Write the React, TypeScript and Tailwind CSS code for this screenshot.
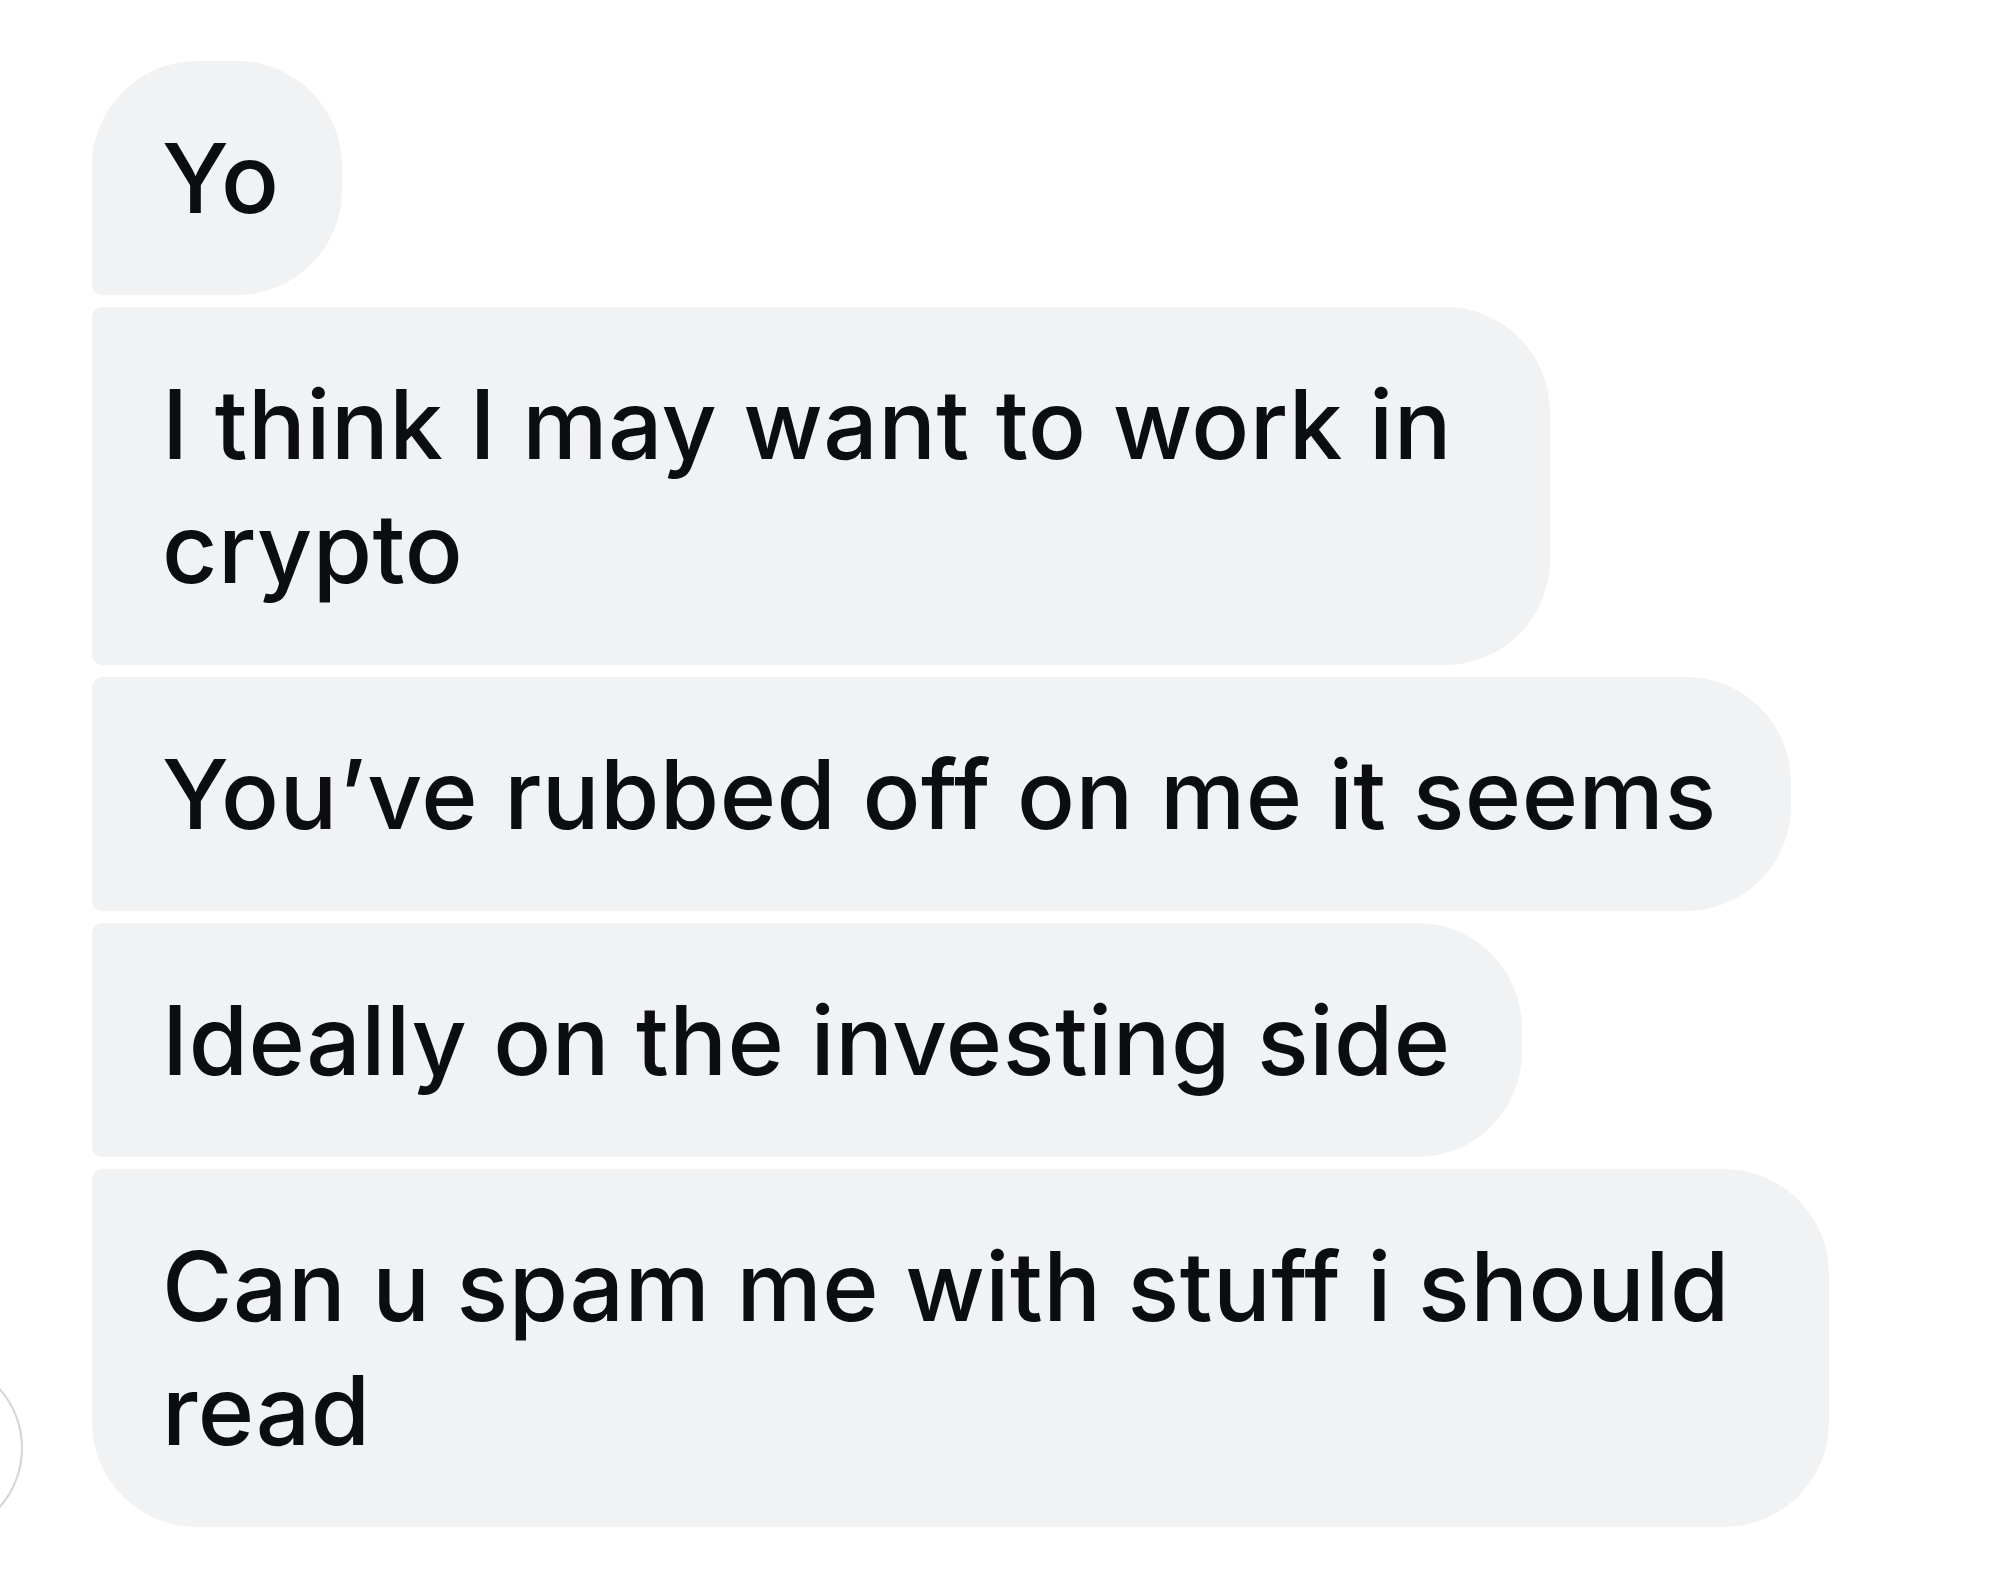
import React from "react";

type Msg = {
  lines: string[];
  width: string;
  corners: string;
};

const messages: Msg[] = [
  { lines: ["Yo"], width: "w-[250px]", corners: "rounded-tl-[105px] rounded-bl-[10px]" },
  { lines: ["I think I may want to work in", "crypto"], width: "w-[1458px]", corners: "rounded-l-[10px]" },
  { lines: ["You\u2019ve rubbed off on me it seems"], width: "w-[1699px]", corners: "rounded-l-[10px]" },
  { lines: ["Ideally on the investing side"], width: "w-[1430px]", corners: "rounded-l-[10px]" },
  { lines: ["Can u spam me with stuff i should", "read"], width: "w-[1737px]", corners: "rounded-tl-[10px] rounded-bl-[105px]" },
];

function Bubble({ msg }: { msg: Msg }) {
  return (
    <div
      className={`${msg.width} ${msg.corners} rounded-r-[105px] bg-[#f1f2f4] pl-[70px] py-[55px] text-[96px] leading-[124px] font-medium tracking-[0.5px] text-[#0c0d11] whitespace-nowrap [font-variant-ligatures:none]`}
    >
      {msg.lines.map((l, i) => (
        <div key={i}>{l}</div>
      ))}
    </div>
  );
}

export default function App() {
  return (
    <div
      className="relative w-[2000px] h-[1584px] bg-white overflow-hidden"
      style={{ fontFamily: "Inter, 'Liberation Sans', sans-serif" }}
    >
      {/* sender avatar, mostly off-screen */}
      <div className="absolute left-[-157px] top-[1358px] w-[180px] h-[180px] rounded-full border-[2px] border-[#d4d4d6] bg-white" />
      <div className="flex flex-col items-start gap-[12px] pl-[92px] pt-[61px]">
        {messages.map((m, i) => (
          <Bubble key={i} msg={m} />
        ))}
      </div>
    </div>
  );
}
